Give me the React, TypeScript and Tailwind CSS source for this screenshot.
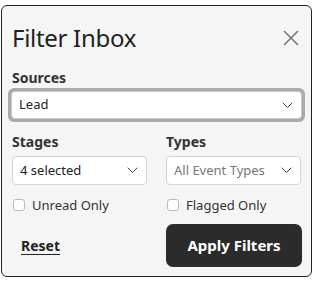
import React from "react";

const Chevron = () => (
  <svg width="11" height="7" viewBox="0 0 11 7" fill="none" className="shrink-0">
    <path d="M1 1 L5.5 5.5 L10 1" stroke="#444" strokeWidth="1" strokeLinecap="round" strokeLinejoin="round" />
  </svg>
);

export default function App() {
  return (
    <div className="w-[315px] h-[283px] bg-white pt-[5px] pl-[1px]" style={{ fontFamily: '"Noto Sans", sans-serif' }}>
      <div className="w-[311px] h-[272px] border border-[#222] rounded-[6px] bg-[#f5f5f5] pl-[10px] pr-[10px] pt-[16px] flex flex-col">
        <div className="flex items-center justify-between h-[32px]">
          <h1 className="text-[24px] leading-[32px] text-[#222] tracking-[-0.3px]">Filter Inbox</h1>
          <svg width="16" height="16" viewBox="0 0 16 16" className="mr-[2px]">
            <path d="M1.5 1.5 L14.5 14.5 M14.5 1.5 L1.5 14.5" stroke="#777" strokeWidth="1.6" strokeLinecap="round" />
          </svg>
        </div>
        <div className="mt-[14px] text-[14px] leading-[20px] font-bold text-[#333]">Sources</div>
        <div className="mt-[0px] rounded-[6px] p-[3px] bg-[#a8aaad] -mx-[4px]">
          <div className="h-[28px] bg-white rounded-[4px] border border-[#c8c8c8] flex items-center justify-between pl-[7px] pr-[8px]">
            <span className="text-[13px] text-[#222]">Lead</span>
            <Chevron />
          </div>
        </div>
        <div className="mt-[10px] grid grid-cols-2 gap-x-[19px] w-[289px]">
          <div className="text-[14px] leading-[20px] font-bold text-[#333]">Stages</div>
          <div className="text-[14px] leading-[20px] font-bold text-[#333]">Types</div>
          <div className="mt-[4px] h-[29px] bg-white rounded-[4px] border border-[#d4d4d4] flex items-center justify-between pl-[7px] pr-[8px]">
            <span className="text-[13px] text-[#222]">4 selected</span>
            <Chevron />
          </div>
          <div className="mt-[4px] h-[29px] bg-white rounded-[4px] border border-[#d4d4d4] flex items-center justify-between pl-[7px] pr-[8px]">
            <span className="text-[13px] text-[#777]">All Event Types</span>
            <Chevron />
          </div>
          <label className="mt-[12px] flex items-center gap-[7px] pl-[1px]">
            <span className="w-[12px] h-[12px] rounded-[3px] border border-[#bbb] bg-white" />
            <span className="text-[13px] leading-[16px] text-[#333]">Unread Only</span>
          </label>
          <label className="mt-[12px] flex items-center gap-[7px] pl-[1px]">
            <span className="w-[12px] h-[12px] rounded-[3px] border border-[#bbb] bg-white" />
            <span className="text-[13px] leading-[16px] text-[#333]">Flagged Only</span>
          </label>
          <div className="mt-[11px] flex items-center pl-[9px]">
            <span className="text-[14px] font-bold text-[#222] underline underline-offset-[3px]">Reset</span>
          </div>
          <button className="mt-[11px] h-[43px] w-[136px] rounded-[7px] bg-[#2b2b2b] text-white text-[15px] font-bold">
            Apply Filters
          </button>
        </div>
      </div>
    </div>
  );
}
